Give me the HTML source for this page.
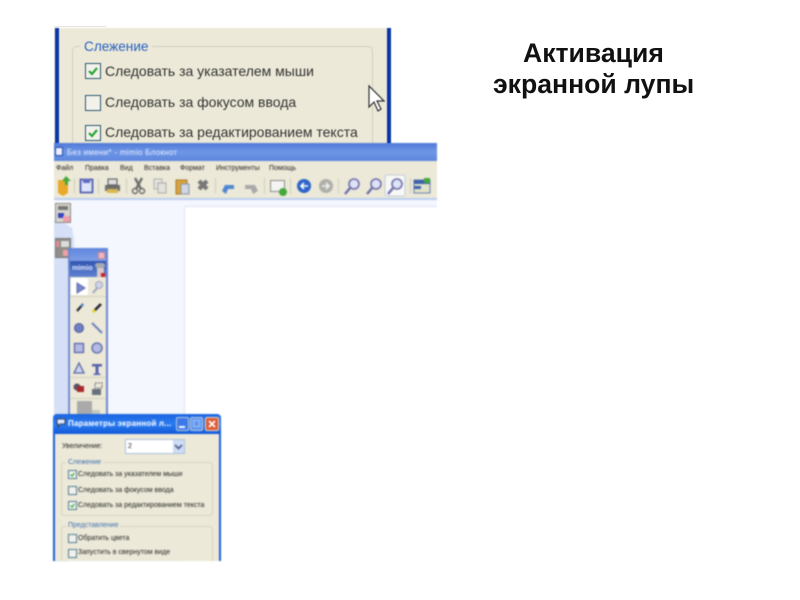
<!DOCTYPE html>
<html lang="ru"><head><meta charset="utf-8"><title>Активация экранной лупы</title>
<style>
html,body{margin:0;padding:0;background:#fff;width:800px;height:600px;overflow:hidden}
body{position:relative;font-family:"Liberation Sans",sans-serif}
.a{position:absolute}
.t{position:absolute;white-space:nowrap;font-family:"Liberation Sans",sans-serif}
.soft{filter:blur(.6px)}
.soft2{filter:blur(.85px)}
.cb{position:absolute;box-sizing:border-box;border:1px solid #4f7a94;background:#f3f2ea}
.cb svg{position:absolute;left:0;top:0;width:100%;height:100%}
</style></head><body>

<div class="t" style="left:523px;top:38px;font-size:26.6px;line-height:31px;font-weight:bold;color:#111">Активация</div>
<div class="t" style="left:493px;top:69px;font-size:26.6px;line-height:31px;font-weight:bold;color:#111">экранной лупы</div>

<div class="a" style="left:54px;top:26px;width:52px;height:1px;background:#e4e4e4"></div>

<!-- Top enlarged panel -->
<div class="a soft" style="left:54px;top:28px;width:337px;height:116px;background:#ece9d8;overflow:hidden">
  <div class="a" style="left:1px;top:0;width:4px;height:116px;background:#0a36a8"></div>
  <div class="a" style="left:333px;top:0;width:4px;height:116px;background:#0a36a8"></div>
  <div class="a" style="left:18px;top:18px;width:301px;height:110px;box-sizing:border-box;border:1px solid #cfcdbd;border-bottom:0;border-radius:5px 5px 0 0"></div>
  <div class="t" style="left:26px;top:10px;padding:0 4px;background:#ece9d8;font-size:13.600px;line-height:17px;color:#2a62c0">Слежение</div>
  <div class="cb" style="left:31px;top:35px;width:16px;height:16px;border-color:#2c5a76"><svg viewBox="0 0 14 14"><path d="M3 7l3 3 5-6" fill="none" stroke="#2aa53a" stroke-width="2.200"/></svg></div>
  <div class="t" style="left:51px;top:35px;font-size:14px;line-height:17px;color:#333">Следовать за указателем мыши</div>
  <div class="cb" style="left:31px;top:67px;width:16px;height:16px;border-color:#2c5a76"></div>
  <div class="t" style="left:51px;top:66px;font-size:14px;line-height:17px;color:#333">Следовать за фокусом ввода</div>
  <div class="cb" style="left:31px;top:97px;width:16px;height:16px;border-color:#2c5a76"><svg viewBox="0 0 14 14"><path d="M3 7l3 3 5-6" fill="none" stroke="#2aa53a" stroke-width="2.200"/></svg></div>
  <div class="t" style="left:51px;top:96px;font-size:14px;line-height:17px;color:#333">Следовать за редактированием текста</div>
</div>
<svg class="a soft" style="left:366px;top:84px" width="20" height="30" viewBox="0 0 20 30"><path d="M3 2v21l5-5 4 9 3-2-4-8h7z" fill="#fff" stroke="#333" stroke-width="1.200"/></svg>

<!-- Notebook window -->
<div class="a soft2" style="left:54px;top:143px;width:383px;height:418px;background:#f4f7fd;overflow:hidden">
  <div class="a" style="left:0;top:0;width:383px;height:18px;background:linear-gradient(#4f79d8,#6e96e6 50%,#5c86dc)"></div>
  <div class="a" style="left:1px;top:4px;width:8px;height:9px;background:#eef2ff;border:1px solid #2244aa;box-sizing:border-box"></div>
  <div class="t" style="left:13px;top:5px;font-size:8px;line-height:10px;letter-spacing:.3px;color:#e6eeff">Без имени* - mimio Блокнот</div>
  <div class="a" style="left:0;top:18px;width:383px;height:37px;background:#ece9d8"></div>
  <div class="t" style="left:2px;top:21px;font-size:7px;line-height:10px;color:#222">Файл</div>
  <div class="t" style="left:31px;top:21px;font-size:7px;line-height:10px;color:#222">Правка</div>
  <div class="t" style="left:66px;top:21px;font-size:7px;line-height:10px;color:#222">Вид</div>
  <div class="t" style="left:90px;top:21px;font-size:7px;line-height:10px;color:#222">Вставка</div>
  <div class="t" style="left:126px;top:21px;font-size:7px;line-height:10px;color:#222">Формат</div>
  <div class="t" style="left:162px;top:21px;font-size:7px;line-height:10px;color:#222">Инструменты</div>
  <div class="t" style="left:215px;top:21px;font-size:7px;line-height:10px;color:#222">Помощь</div>
  <div class="a" style="left:0;top:55px;width:383px;height:2px;background:#b9cdf0"></div>
  <svg class="a" style="left:0;top:31px" width="383" height="24" viewBox="0 0 383 24">
    <path d="M4 6h8l2 2v11l-5 3-5-3z" fill="#e9a92a"/><path d="M12 2l5 5h-3v4h-3V7H8z" fill="#43a838"/>
    <rect x="26.500" y="5.500" width="12" height="13" fill="#dfe4f8" stroke="#3f4fae" stroke-width="1.600"/><rect x="29" y="5" width="7" height="4" fill="#5c6bc0"/>
    <path d="M51 11h15v6H51z" fill="#6f6f6f"/><rect x="54" y="5" width="9" height="6" fill="#ddd" stroke="#555"/><rect x="53" y="15" width="11" height="4" fill="#d8b850"/>
    <path d="M81 4l6 11M88 4l-6 11" stroke="#6e6e6e" stroke-width="2.400"/><circle cx="81" cy="17" r="2.500" fill="none" stroke="#666" stroke-width="1.400"/><circle cx="88" cy="17" r="2.500" fill="none" stroke="#666" stroke-width="1.400"/>
    <rect x="100" y="5" width="8" height="10" fill="#e4e2dc" stroke="#b0b0b0"/><rect x="104" y="9" width="8" height="10" fill="#e4e2dc" stroke="#a9a9a9"/>
    <rect x="122" y="6" width="11" height="14" fill="#d9a23c" stroke="#a67c2a"/><rect x="127" y="10" width="8" height="10" fill="#cfd6e4" stroke="#8a94a8"/>
    <path d="M145 7l8 8M153 7l-8 8" stroke="#777" stroke-width="4.200"/>
    <path d="M168 17l3-6h9v4h-6l-2 5z" fill="#4f87d0"/>
    <path d="M204 17l-3-6h-10v4h6l2 5z" fill="#a9a9a9"/>
    <rect x="216.500" y="6.500" width="14" height="11" fill="#f4f4f2" stroke="#8a8a8a"/><circle cx="229" cy="18" r="4" fill="#44a83c"/>
    <circle cx="250" cy="12" r="7" fill="#2d64c8"/><path d="M254 12h-7M250 9l-3 3 3 3" stroke="#fff" stroke-width="1.600" fill="none"/>
    <circle cx="272" cy="12" r="7" fill="#b0b0aa"/><path d="M268 12h7M272 9l3 3-3 3" stroke="#eee" stroke-width="1.600" fill="none"/>
    <g fill="#dfe3f7" stroke="#6e6eaa" stroke-width="1.600"><circle cx="300" cy="10" r="5"/><circle cx="322" cy="10" r="5"/></g>
    <path d="M296 14l-5 6M318 14l-5 6" stroke="#6e6eaa" stroke-width="2.400"/>
    <rect x="331" y="1" width="20" height="21" rx="2" fill="#f8f8f6" stroke="#c3cbd8"/><circle cx="343" cy="10" r="5" fill="#dfe3f7" stroke="#6e6eaa" stroke-width="1.600"/><path d="M339 14l-5 6" stroke="#6e6eaa" stroke-width="2.400"/>
    <rect x="360" y="6" width="16" height="13" fill="#dfe3c8" stroke="#6b7fb0"/><rect x="360" y="6" width="16" height="4" fill="#3f5fae"/><rect x="370" y="4" width="6" height="5" fill="#44a83c"/><rect x="360" y="12" width="7" height="3" fill="#3f5fae"/>
    <g stroke="#d0cebc"><path d="M20.500 4v16M44.500 4v16M72.500 4v16M161.500 4v16M210.500 4v16M236.500 4v16M284.500 4v16M356.500 4v16"/></g>
  </svg>
  <div class="a" style="left:130px;top:63px;width:253px;height:355px;background:#fff;border-left:1px solid #dde5f4;border-top:1px solid #dde5f4;box-sizing:border-box"></div>
  <svg class="a" style="left:0;top:57px" width="30" height="361" viewBox="0 0 30 361"><path d="M0 20L12 24 18 28 20 38V70L14 70V361H0z" fill="#d5e0f6"/></svg>
  <div class="a" style="left:1px;top:60px;width:16px;height:20px;background:#d8d6ca;border:1px solid #888;box-sizing:border-box"><div class="a" style="left:2px;top:2px;width:10px;height:4px;background:#777"></div><div class="a" style="left:2px;top:9px;width:6px;height:5px;background:#3a44c0"></div><div class="a" style="left:7px;top:12px;width:7px;height:6px;background:#f0a0a8"></div></div>
  <div class="a" style="left:1px;top:95px;width:16px;height:20px;background:#8f8f88;border:1px solid #777;box-sizing:border-box"><div class="a" style="left:5px;top:2px;width:8px;height:6px;background:#ddd"></div><div class="a" style="left:0;top:2px;width:3px;height:6px;background:#e98a90"></div><div class="a" style="left:7px;top:11px;width:6px;height:6px;background:#f0a0a8"></div></div>
</div>

<!-- Mimio toolbox -->
<div class="a soft2" style="left:68px;top:248px;width:40px;height:170px;background:#ece9d8;border-left:2px solid #6f86d0;border-right:2px solid #6f86d0;box-sizing:border-box;overflow:hidden">
  <div class="a" style="left:0;top:0;width:36px;height:13px;background:linear-gradient(#5f86dc,#7e9de6)"></div>
  <div class="a" style="left:28px;top:4px;width:7px;height:7px;background:#e7b8c4;border:1px solid #d88;box-sizing:border-box"></div>
  <div class="a" style="left:0;top:13px;width:36px;height:16px;background:linear-gradient(#2f55b0,#5f82d0)"></div>
  <div class="t" style="left:2px;top:17px;font-size:7px;line-height:8px;font-weight:bold;color:#e3e8ff">mimio</div>
  <div class="a" style="left:25px;top:15px;width:10px;height:5px;border-radius:4px;background:#a7aab2"></div>
  <div class="a" style="left:27px;top:20px;width:7px;height:9px;background:#d9c9c8"></div>
  <div class="a" style="left:31px;top:25px;width:4px;height:4px;background:#c22"></div>
  <div class="a" style="left:1px;top:30px;width:17px;height:17px;background:#fff;border-radius:2px"></div>
  <svg class="a" style="left:0;top:29px" width="36" height="141" viewBox="0 0 36 141">
    <path d="M7 6v10l8-5z" fill="#7a86cc" stroke="#5f68a8"/>
    <circle cx="29" cy="8" r="3.500" fill="#cfd3e8" stroke="#a0a4bd"/><path d="M27 11l-4 5" stroke="#a0a4bd" stroke-width="2"/>
    <path d="M13 27l-6 7" stroke="#223" stroke-width="2.200" fill="none"/><path d="M13 27l-2 2.500" stroke="#4a84c4" stroke-width="2.400"/>
    <path d="M31 27l-6 6" stroke="#223" stroke-width="2.600"/><path d="M25 33l-2 2" stroke="#e6cc22" stroke-width="3"/>
    <circle cx="9" cy="51" r="4.500" fill="#6f7fc4" stroke="#4d5894"/>
    <path d="M22 46l10 10" stroke="#6d7fbc" stroke-width="2"/>
    <rect x="4.500" y="66.500" width="9" height="9" fill="#b3bbe4" stroke="#5a66a8" stroke-width="1.300"/>
    <circle cx="27" cy="71" r="5" fill="#b3bbe4" stroke="#5a66a8" stroke-width="1.300"/>
    <path d="M9 86l-5 10h10z" fill="#ccd2ec" stroke="#5a66a8" stroke-width="1.300"/>
    <path d="M22 87h10v2.500h-3.500v7h2v1.500h-7v-1.500h2v-7h-3.500z" fill="#5763ac"/>
    <circle cx="7" cy="110" r="3.500" fill="#556"/><rect x="7" y="109" width="7" height="6" fill="#a8262c"/>
    <rect x="22" y="112" width="9" height="6" fill="#68707e"/><rect x="25" y="106" width="7" height="5" fill="none" stroke="#667" stroke-dasharray="2 1"/>
    <path d="M0 19.500h36M0 100.500h36M0 121.500h36" stroke="#d2cfbe"/>
    <rect x="7" y="124" width="15" height="17" fill="#aaa"/><rect x="22" y="133" width="8" height="8" fill="#c7c7c2"/>
  </svg>
</div>

<!-- Dialog -->
<div class="a soft2" style="left:53px;top:414px;width:168px;height:147px;background:#ece9d8;overflow:hidden;border-radius:4px 4px 0 0">
  <div class="a" style="left:0;top:0;width:168px;height:20px;background:linear-gradient(#1a63e0,#2c7cf0 50%,#1058d8)"></div>
  <div class="a" style="left:0;top:20px;width:2px;height:127px;background:#1a5fd8"></div>
  <div class="a" style="left:166px;top:20px;width:2px;height:127px;background:#1a5fd8"></div>
  <svg class="a" style="left:3px;top:4px" width="10" height="10" viewBox="0 0 10 10"><path d="M1 1h8v5H4L2 9V6H1z" fill="#dfe6ff" stroke="#345"/></svg>
  <div class="t" style="left:15px;top:5px;font-size:8px;line-height:10px;font-weight:bold;letter-spacing:.2px;color:#fff">Параметры экранной л...</div>
  <div class="a" style="left:123px;top:3px;width:13px;height:14px;background:#3d78e8;border:1px solid #bcd;box-sizing:border-box;border-radius:2px"><div class="a" style="left:2px;top:8px;width:6px;height:2px;background:#fff"></div></div>
  <div class="a" style="left:137px;top:3px;width:13px;height:14px;background:#5f96ee;border:1px solid #bcd;box-sizing:border-box;border-radius:2px"><div class="a" style="left:2px;top:2px;width:7px;height:7px;border:1px solid #a8c4f4;box-sizing:border-box"></div></div>
  <div class="a" style="left:152px;top:3px;width:14px;height:14px;background:#df5a30;border:1px solid #edc;box-sizing:border-box;border-radius:2px"><svg class="a" style="left:0;top:0" width="12" height="12" viewBox="0 0 12 12"><path d="M3 3l6 6M9 3l-6 6" stroke="#fff" stroke-width="1.800"/></svg></div>
  <div class="t" style="left:9px;top:28px;font-size:7px;line-height:10px;color:#222">Увеличение:</div>
  <div class="a" style="left:72px;top:25px;width:60px;height:15px;background:#fff;border:1px solid #aac0dc;box-sizing:border-box"></div>
  <div class="t" style="left:75px;top:28px;font-size:7px;line-height:10px;color:#222">2</div>
  <div class="a" style="left:120px;top:26px;width:11px;height:13px;background:#cfdcf6"></div>
  <svg class="a" style="left:121px;top:30px" width="9" height="6" viewBox="0 0 9 6"><path d="M1 1l3.500 3.500L8 1" fill="none" stroke="#4d6185" stroke-width="1.800"/></svg>

  <div class="a" style="left:8px;top:48px;width:152px;height:54px;border:1px solid #d6d3c2;border-radius:3px;box-sizing:border-box"></div>
  <div class="t" style="left:13px;top:44px;padding:0 2px;background:#ece9d8;font-size:7px;line-height:9px;color:#3f6fae">Слежение</div>
  <div class="cb" style="left:15px;top:56px;width:9px;height:9px"><svg viewBox="0 0 9 9"><path d="M2 4.500l2 2 3-4" fill="none" stroke="#2aa53a" stroke-width="1.500"/></svg></div>
  <div class="t" style="left:25px;top:56px;font-size:7px;line-height:10px;color:#222">Следовать за указателем мыши</div>
  <div class="cb" style="left:15px;top:72px;width:9px;height:9px"></div>
  <div class="t" style="left:25px;top:72px;font-size:7px;line-height:10px;color:#222">Следовать за фокусом ввода</div>
  <div class="cb" style="left:15px;top:87px;width:9px;height:9px"><svg viewBox="0 0 9 9"><path d="M2 4.500l2 2 3-4" fill="none" stroke="#2aa53a" stroke-width="1.500"/></svg></div>
  <div class="t" style="left:25px;top:87px;font-size:7px;line-height:10px;color:#222">Следовать за редактированием текста</div>

  <div class="a" style="left:8px;top:112px;width:152px;height:50px;border:1px solid #d6d3c2;border-radius:3px;box-sizing:border-box"></div>
  <div class="t" style="left:13px;top:107px;padding:0 2px;background:#ece9d8;font-size:7px;line-height:9px;color:#3f6fae">Представление</div>
  <div class="cb" style="left:15px;top:120px;width:9px;height:9px"></div>
  <div class="t" style="left:25px;top:120px;font-size:7px;line-height:10px;color:#222">Обратить цвета</div>
  <div class="cb" style="left:15px;top:135px;width:9px;height:9px"></div>
  <div class="t" style="left:25px;top:134px;font-size:7px;line-height:10px;color:#222">Запустить в свернутом виде</div>
</div>
</body></html>
